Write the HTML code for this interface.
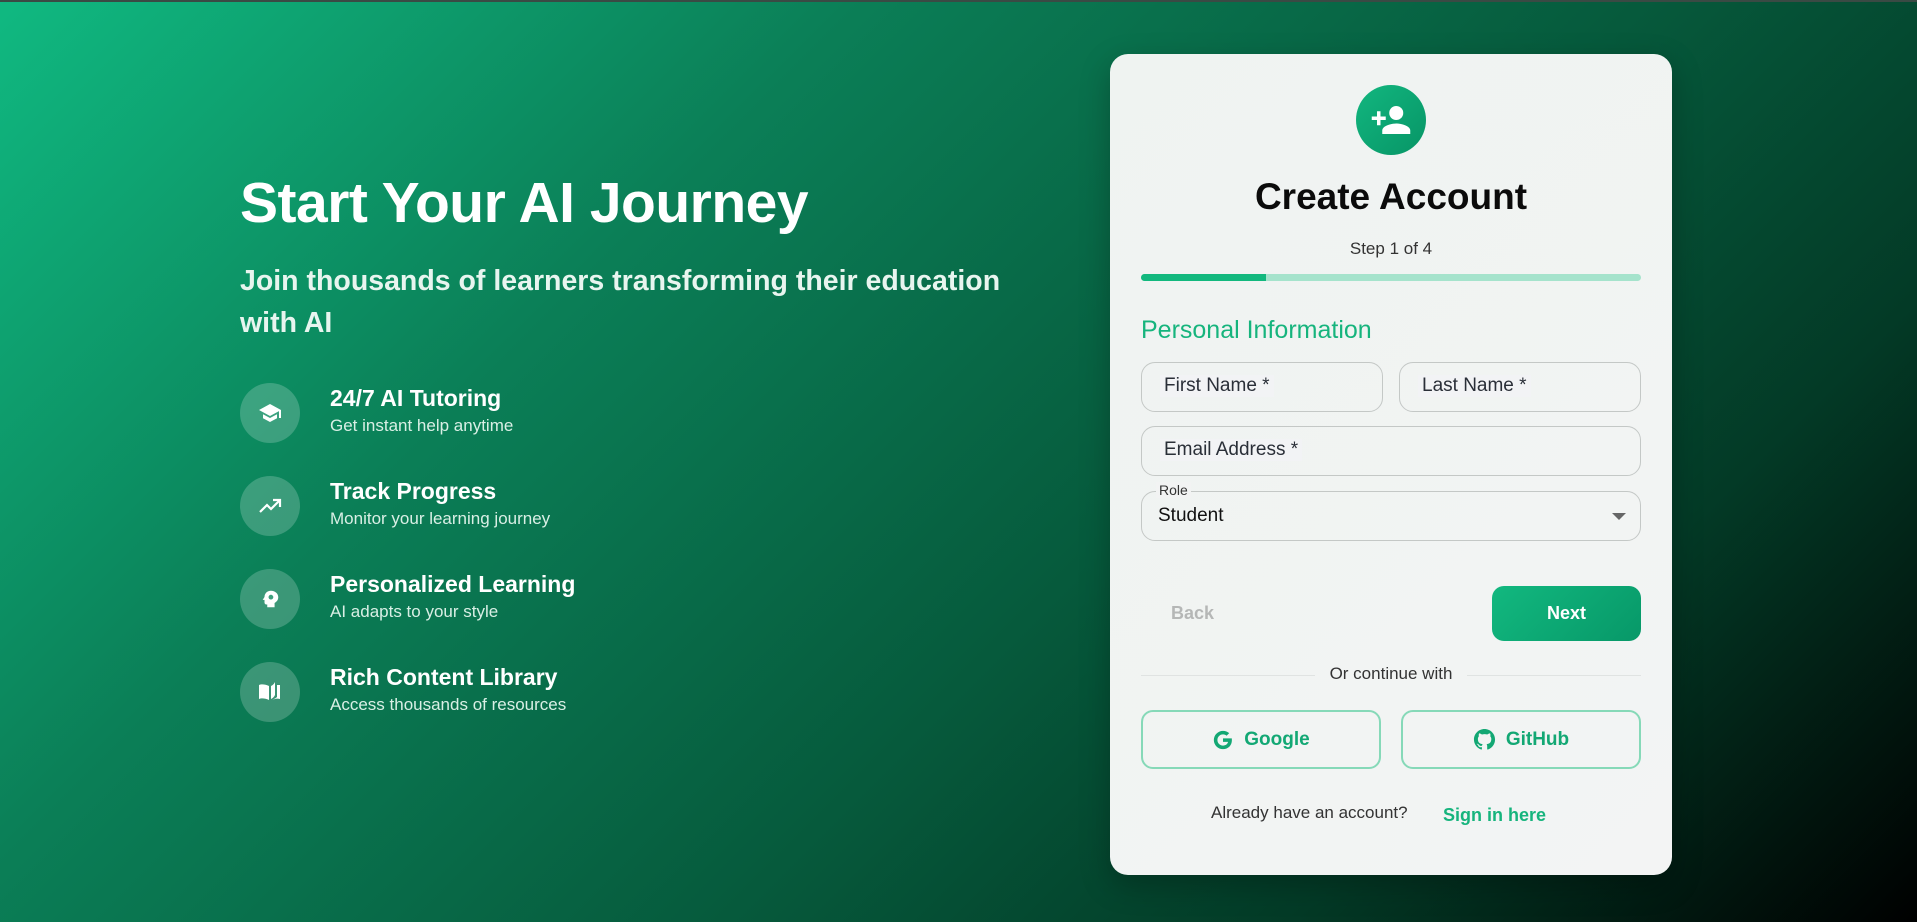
<!DOCTYPE html>
<html><head><meta charset="utf-8"><style>
*{margin:0;padding:0;box-sizing:border-box}
html,body{width:1917px;height:922px;overflow:hidden}
body{font-family:"Liberation Sans",sans-serif;position:relative;background:linear-gradient(135deg,#10b981 0%,#0b7f57 30%,#065a3c 58%,#033a26 78%,#000 100%);border-top:2px solid #3a4a44}
.abs{position:absolute}
h1{position:absolute;left:240px;top:168px;font-size:57px;font-weight:700;color:#fff;letter-spacing:-0.5px}
.sub{position:absolute;left:240px;top:258px;width:820px;font-size:28.5px;line-height:42px;font-weight:700;color:#e8f5ef}
.feat{position:absolute;left:240px;width:600px;height:60px}
.feat .c{position:absolute;left:0;top:0;width:60px;height:60px;border-radius:50%;background:rgba(255,255,255,.2);display:flex;align-items:center;justify-content:center}
.feat .t{position:absolute;left:90px;top:2px;font-size:23px;font-weight:700;color:#fff;white-space:nowrap}
.feat .s{position:absolute;left:90px;top:33px;font-size:17px;color:#d9efe5;white-space:nowrap}
.card{position:absolute;left:1110px;top:52px;width:562px;height:821px;border-radius:18px;background:linear-gradient(135deg,#eff3f1,#f3f4f4);box-shadow:0 10px 30px rgba(0,0,0,.25)}
.in{position:absolute;border:1px solid #c4c8c6;border-radius:14px;height:50px}
.lab{position:absolute;left:18px;top:12px;font-size:19px;color:#2a2f38;background:#f2f3f5;padding:0 4px}
.btn{position:absolute;border:2px solid #86d9b8;border-radius:12px;height:59px;display:flex;align-items:center;justify-content:center;gap:10px;color:#13a874;font-weight:700;font-size:19px}
</style></head><body>
<h1>Start Your AI Journey</h1>
<div class="sub">Join thousands of learners transforming their education with AI</div>

<div class="feat" style="top:381px"><div class="c"><svg width="26" height="24" viewBox="0 0 24 24" fill="#fff"><path d="M12 3L1 9l11 6 9-4.9V17h2V9L12 3z"/><path d="M5 13.2v4L12 21l7-3.8v-4L12 17l-7-3.8z"/></svg></div><div class="t">24/7 AI Tutoring</div><div class="s">Get instant help anytime</div></div>
<div class="feat" style="top:474px"><div class="c"><svg width="26" height="24" viewBox="0 0 24 24" fill="none" stroke="#fff" stroke-width="2.2"><path d="M2 18l7-7 4 4 8-8"/><path d="M15 6h7v7" fill="none"/></svg></div><div class="t">Track Progress</div><div class="s">Monitor your learning journey</div></div>
<div class="feat" style="top:567px"><div class="c"><svg width="22" height="26" viewBox="0 0 24 24" fill="#fff"><path d="M13 3C9 3 6 6 6 9.8L4 13h2v3c0 1.1.9 2 2 2h1v3h8v-4.7c2.4-1.1 4-3.5 4-6.3 0-4-3.5-7-8-7z"/><circle cx="13" cy="10" r="2.6" fill="#3e9f7d"/></svg></div><div class="t">Personalized Learning</div><div class="s">AI adapts to your style</div></div>
<div class="feat" style="top:660px"><div class="c"><svg width="26" height="24" viewBox="0 0 24 24" fill="#fff"><path d="M1 5c2-1 6-1 10 1v14c-4-2-8-2-10-1V5z"/><path d="M13 6c2-1 3-2 4-4v13c-1 2-2 3-4 4V6z"/><path d="M19 5h3v14c-3-1-6 0-8 1 2-1 4-2 5-3V5z"/></svg></div><div class="t">Rich Content Library</div><div class="s">Access thousands of resources</div></div>

<div class="card">
 <div class="abs" style="left:246px;top:31px;width:70px;height:70px;border-radius:50%;background:linear-gradient(135deg,#12b67f,#079566);display:flex;align-items:center;justify-content:center"><svg width="42" height="42" viewBox="0 0 24 24" fill="#fff"><circle cx="15" cy="8" r="4"/><path d="M15 14c-2.7 0-8 1.3-8 4v2h16v-2c0-2.7-5.3-4-8-4z"/><path d="M6 10V7H4v3H1v2h3v3h2v-3h3v-2H6z"/></svg></div>
 <div class="abs" style="left:0;width:562px;top:122px;text-align:center;font-size:37px;font-weight:700;color:#0b0b0b">Create Account</div>
 <div class="abs" style="left:0;width:562px;top:185px;text-align:center;font-size:17px;color:#333">Step 1 of 4</div>
 <div class="abs" style="left:31px;top:220px;width:500px;height:7px;border-radius:4px;background:#a5e3cc"><div style="width:125px;height:7px;border-radius:4px 0 0 4px;background:#12b87e"></div></div>
 <div class="abs" style="left:31px;top:262px;font-size:25px;color:#16b47d">Personal Information</div>
 <div class="in" style="left:31px;top:308px;width:242px"><span class="lab">First Name *</span></div>
 <div class="in" style="left:289px;top:308px;width:242px"><span class="lab">Last Name *</span></div>
 <div class="in" style="left:31px;top:372px;width:500px"><span class="lab">Email Address *</span></div>
 <div class="in" style="left:31px;top:437px;width:500px"><span class="abs" style="left:14px;top:-10px;font-size:14px;color:#333;background:#f2f3f3;padding:0 3px">Role</span><span class="abs" style="left:16px;top:13px;font-size:19px;color:#111">Student</span><span class="abs" style="right:14px;top:21px;width:0;height:0;border-left:7px solid transparent;border-right:7px solid transparent;border-top:7px solid #666"></span></div>
 <div class="abs" style="left:61px;top:549px;font-size:18px;font-weight:700;color:#b5b7b6">Back</div>
 <div class="abs" style="left:382px;top:532px;width:149px;height:55px;border-radius:12px;background:linear-gradient(135deg,#12b87f,#079868);color:#fff;font-weight:700;font-size:18px;display:flex;align-items:center;justify-content:center">Next</div>
 <div class="abs" style="left:31px;top:621px;width:174px;height:1px;background:#e0e3e2"></div>
 <div class="abs" style="left:357px;top:621px;width:174px;height:1px;background:#e0e3e2"></div>
 <div class="abs" style="left:0;width:562px;top:610px;text-align:center;font-size:17px;color:#333">Or continue with</div>
 <div class="btn" style="left:31px;top:656px;width:240px"><svg width="22" height="22" viewBox="0 0 24 24"><path fill="#13a874" d="M21.6 10.2H12v3.9h5.5c-.5 2.5-2.7 4-5.5 4-3.4 0-6.1-2.7-6.1-6.1S8.6 5.9 12 5.9c1.5 0 2.9.5 3.9 1.5l2.9-2.9C17 2.9 14.7 2 12 2 6.5 2 2 6.5 2 12s4.5 10 10 10c5.8 0 9.7-4.1 9.7-9.8 0-.7-.1-1.4-.1-2z"/></svg>Google</div>
 <div class="btn" style="left:291px;top:656px;width:240px"><svg width="23" height="23" viewBox="0 0 24 24"><path fill="#13a874" d="M12 1C5.9 1 1 5.9 1 12c0 4.9 3.2 9 7.5 10.4.6.1.8-.2.8-.5v-1.900c-3.1.7-3.7-1.3-3.7-1.3-.5-1.3-1.2-1.6-1.2-1.6-1-.7.1-.7.1-.7 1.1.1 1.7 1.1 1.7 1.1 1 1.7 2.6 1.2 3.2.9.1-.7.4-1.2.7-1.5-2.4-.3-5-1.2-5-5.4 0-1.2.4-2.2 1.1-2.9-.1-.3-.5-1.4.1-2.9 0 0 .9-.3 3 1.1.9-.2 1.8-.4 2.800-.4s1.9.1 2.8.4c2.1-1.4 3-1.1 3-1.1.6 1.5.2 2.6.1 2.9.7.8 1.1 1.7 1.1 2.9 0 4.2-2.6 5.1-5 5.4.4.3.7 1 .7 2v3c0 .3.2.6.8.5C19.8 21 23 16.9 23 12 23 5.9 18.1 1 12 1z"/></svg>GitHub</div>
 <div class="abs" style="left:101px;top:749px;font-size:17px;color:#333">Already have an account?</div>
 <div class="abs" style="left:333px;top:751px;font-size:18px;font-weight:700;color:#16b47d">Sign in here</div>
</div>
</body></html>
